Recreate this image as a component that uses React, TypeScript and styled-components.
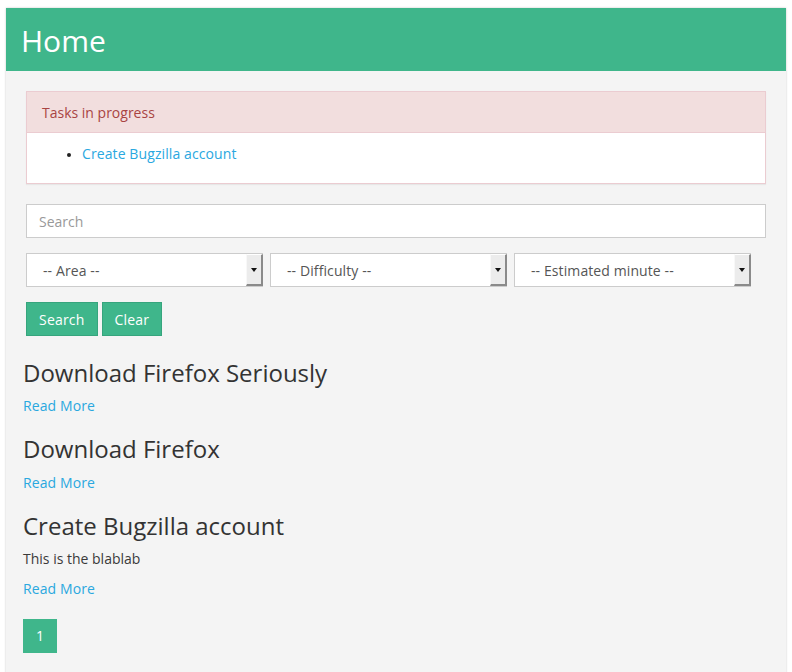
import React from "react";
import styled, { createGlobalStyle } from "styled-components";

const Global = createGlobalStyle`
  html, body { margin: 0; padding: 0; background: #ffffff; }
  body {
    font-family: "Open Sans", "Noto Sans", "Liberation Sans", sans-serif;
    font-size: 14px;
    line-height: 20px;
    color: #333333;
  }
  * { box-sizing: border-box; }
`;

const green = "#3fb68b";
const link = "#2aa8df";

const Page = styled.div`
  margin: 8px 6px 0;
  background: #f4f4f4;
  box-shadow: 0 0 2px rgba(0, 0, 0, 0.22);
  min-height: 700px;
`;

const Header = styled.header`
  height: 63px;
  background: ${green};
  display: flex;
  align-items: center;
  padding: 0 15px;
`;

const Title = styled.h1`
  margin: 3px 0 0;
  font-size: 30px;
  font-weight: 400;
  line-height: 36px;
  color: #ffffff;
`;

const Content = styled.main`
  padding: 20px 17px 20px 17px;
  display: flow-root;
`;

const Inset = styled.div`
  margin: 0 3px;
`;

const Panel = styled.section`
  border: 1px solid #ebccd1;
  background: #ffffff;
  margin-bottom: 20px;
  box-shadow: 0 1px 1px rgba(0, 0, 0, 0.05);
`;

const PanelHeading = styled.div`
  background: #f2dede;
  color: #a94442;
  padding: 11px 15px 9px;
  border-bottom: 1px solid #ebccd1;
`;

const PanelBody = styled.div`
  padding: 11px 15px 9px;
`;

const TaskList = styled.ul`
  margin: 0 0 10px;
  padding-left: 40px;
  li::marker { font-size: 11px; color: #222; }
`;

const Link = styled.a`
  color: ${link};
  text-decoration: none;
  letter-spacing: 0.1px;
`;

const SearchInput = styled.input`
  display: block;
  width: 100%;
  height: 34px;
  padding: 6px 12px;
  border: 1px solid #cccccc;
  background: #ffffff;
  font-family: inherit;
  font-size: 14px;
  color: #555;
  margin-bottom: 15px;
  outline: none;
  &::placeholder { color: #999999; }
`;

const SelectRow = styled.div`
  display: flex;
  gap: 7px;
  margin-bottom: 15px;
`;

const SelectBox = styled.div`
  width: 237px;
  height: 34px;
  border: 1px solid #cccccc;
  background: #ffffff;
  display: flex;
  align-items: stretch;
  color: #555555;
`;

const SelectLabel = styled.span`
  flex: 1;
  display: flex;
  align-items: center;
  padding: 2px 0 0 16px;
  letter-spacing: 0.1px;
`;

const SelectArrow = styled.span`
  width: 17px;
  margin-right: -1px;
  background: #ececec;
  border-top: 1px solid #ffffff;
  border-left: 1px solid #f8f8f8;
  border-right: 2px solid #8a8a8a;
  border-bottom: 2px solid #8a8a8a;
  display: flex;
  align-items: center;
  justify-content: center;
  &::after {
    content: "";
    border-left: 3px solid transparent;
    border-right: 3px solid transparent;
    border-top: 4px solid #111;
  }
`;

const ButtonRow = styled.div`
  display: flex;
  gap: 4px;
  margin-bottom: 24px;
`;

const Button = styled.button`
  height: 34px;
  padding: 1px 12px 0;
  background: ${green};
  border: 1px solid #36a57d;
  color: #ffffff;
  font-family: inherit;
  font-size: 14px;
  line-height: 20px;
  letter-spacing: 0.2px;
  cursor: pointer;
`;

const Post = styled.article``;

const PostTitle = styled.h3`
  margin: 20px 0 10px;
  font-size: 24px;
  font-weight: 400;
  line-height: 1.1;
  color: #333333;
`;

const Text = styled.p`
  margin: 0 0 10px;
  color: #3a3a3a;
`;

const Pagination = styled.div`
  margin: 20px 0;
  display: flex;
`;

const PageButton = styled.span<{ $active?: boolean }>`
  width: 34px;
  height: 34px;
  display: flex;
  align-items: center;
  justify-content: center;
  background: ${(p) => (p.$active ? green : "#fff")};
  color: ${(p) => (p.$active ? "#fff" : link)};
`;

const posts = [
  { title: "Download Firefox Seriously" },
  { title: "Download Firefox" },
  { title: "Create Bugzilla account", body: "This is the blablab" },
];

const selects = ["-- Area --", "-- Difficulty --", "-- Estimated minute --"];

export default function App() {
  return (
    <>
      <Global />
      <Page>
        <Header>
          <Title>Home</Title>
        </Header>
        <Content>
          <Inset>
            <Panel>
              <PanelHeading>Tasks in progress</PanelHeading>
              <PanelBody>
                <TaskList>
                  <li>
                    <Link href="#">Create Bugzilla account</Link>
                  </li>
                </TaskList>
              </PanelBody>
            </Panel>
            <SearchInput placeholder="Search" />
            <SelectRow>
              {selects.map((s) => (
                <SelectBox key={s}>
                  <SelectLabel>{s}</SelectLabel>
                  <SelectArrow />
                </SelectBox>
              ))}
            </SelectRow>
            <ButtonRow>
              <Button>Search</Button>
              <Button>Clear</Button>
            </ButtonRow>
          </Inset>
          {posts.map((p) => (
            <Post key={p.title}>
              <PostTitle>{p.title}</PostTitle>
              {p.body && <Text>{p.body}</Text>}
              <Text>
                <Link href="#">Read More</Link>
              </Text>
            </Post>
          ))}
          <Pagination>
            <PageButton $active>1</PageButton>
          </Pagination>
        </Content>
      </Page>
    </>
  );
}
